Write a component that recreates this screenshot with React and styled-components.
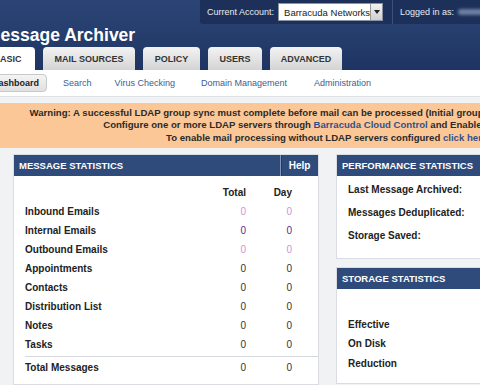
import React from 'react';
import styled, { createGlobalStyle } from 'styled-components';

const GlobalStyle = createGlobalStyle`
  html, body {
    margin: 0;
    padding: 0;
    overflow: hidden;
    background: #f1f2f4;
    font-family: "Liberation Sans", Arial, sans-serif;
  }
`;

const Page = styled.div`
  width: 720px;
  margin-left: -20px;
`;

const Header = styled.div`
  height: 70px;
  background: linear-gradient(to bottom, #2b4576 0%, #243c6a 60%, #1e3462 100%);
  display: flex;
  flex-direction: column;
  position: relative;
`;

const AccountBar = styled.div`
  position: absolute;
  top: 0;
  left: 220px;
  width: 320px;
  height: 24px;
  background: #1d3059;
  border-bottom-left-radius: 3px;
  display: flex;
  align-items: center;
  padding-left: 7px;
  box-sizing: border-box;
  color: #e8ecf3;
  font-size: 9px;
  white-space: nowrap;
`;

const Select = styled.div`
  margin-left: 4px;
  width: 105px;
  height: 18px;
  background: #fff;
  border: 1px solid #8a93a3;
  display: flex;
  align-items: center;
  justify-content: space-between;
  color: #222;
  font-size: 9.5px;
  padding-left: 5px;
  box-sizing: border-box;
`;

const SelectArrow = styled.div`
  width: 11px;
  height: 16px;
  background: linear-gradient(#f2f2f2, #cfcfcf);
  border-left: 1px solid #9a9a9a;
  display: flex;
  align-items: center;
  justify-content: center;
  &::after {
    content: '';
    border-left: 3px solid transparent;
    border-right: 3px solid transparent;
    border-top: 4px solid #222;
  }
`;

const Divider = styled.div`
  width: 1px;
  height: 24px;
  background: #3b5180;
  margin: 0 7px 0 9px;
`;

const Blur = styled.span`
  display: inline-block;
  width: 30px;
  height: 6px;
  margin-left: 4px;
  background: #6d7fa3;
  border-radius: 3px;
  filter: blur(1.5px);
`;

const Title = styled.div`
  color: #fff;
  font-weight: bold;
  font-size: 17.5px;
  padding: 27px 0 0 6px;
  height: 47px;
  box-sizing: border-box;
  line-height: 17px;
`;

const Tabs = styled.div`
  display: flex;
  gap: 8px;
  height: 23px;
`;

const Tab = styled.div`
  height: 23px;
  width: ${p => p.$w}px;
  display: flex;
  align-items: center;
  justify-content: center;
  border-radius: 4px 4px 0 0;
  font-size: 9px;
  font-weight: bold;
  color: #333;
  background: ${p => p.$active ? '#fff' : 'linear-gradient(#f3f3f3, #d4d4d4)'};
`;

const SubNav = styled.div`
  height: 27px;
  background: #fff;
  border-bottom: 1px solid #dde0e4;
  display: flex;
  align-items: center;
  font-size: 9px;
  box-sizing: border-box;
`;

const NavLink = styled.div`
  color: ${p => p.$active ? '#222' : '#3d5d93'};
  font-weight: ${p => p.$active ? 'bold' : 'normal'};
  margin-left: ${p => p.$ml}px;
  ${p => p.$active && `
    background: linear-gradient(#f4f4f4, #e0e0e0);
    border: 1px solid #c9c9c9;
    border-radius: 4px;
    padding: 3px 7px 3px 6px;
  `}
`;

const Warning = styled.div`
  margin-top: 6px;
  background: #fbc796;
  padding: 4px 0;
  text-align: center;
  font-size: 9.6px;
  font-weight: bold;
  color: #2b2b2b;
  line-height: 12.3px;
  width: 696px;
  white-space: nowrap;
`;

const WarnLink = styled.span`
  color: #34508a;
`;

const Content = styled.div`
  display: flex;
  align-items: flex-start;
  gap: 17px;
  padding: 6px 0 0 33px;
`;

const Panel = styled.div`
  background: #fff;
  border: 1px solid #d9dce1;
  width: ${p => p.$w}px;
  margin-bottom: ${p => p.$mb || 0}px;
`;

const PanelHead = styled.div`
  height: 21px;
  background: #2f4b7c;
  color: #fff;
  font-size: 9.5px;
  font-weight: bold;
  display: flex;
  align-items: center;
`;

const HeadTitle = styled.div`
  flex: 1;
  padding-left: 5px;
`;

const HelpBox = styled.div`
  width: 37px;
  height: 21px;
  border-left: 1px solid #8295b8;
  box-shadow: inset 1px 0 0 #23395f;
  display: flex;
  align-items: center;
  justify-content: center;
  font-size: 10px;
`;

const StatGrid = styled.div`
  display: grid;
  grid-template-columns: 1fr 40px 46px;
  padding: 7px 26px 5px 11px;
  font-size: 10px;
`;

const Cell = styled.div`
  height: ${p => p.$h || 19}px;
  display: flex;
  align-items: center;
  justify-content: ${p => p.$label ? 'flex-start' : 'flex-end'};
  font-weight: ${p => p.$bold ? 'bold' : 'normal'};
  color: ${p => p.$c || '#222'};
  ${p => p.$top && 'border-top: 1px solid #d5d8dc; margin: 2px -26px 0 0; padding-right: 26px;'}
  ${p => p.$topLabel && 'border-top: 1px solid #d5d8dc; margin: 2px 0 0 0;'}
`;

const Side = styled.div`
  display: flex;
  flex-direction: column;
`;

const InfoList = styled.div`
  display: flex;
  flex-direction: column;
  padding: ${p => p.$pt}px 0 ${p => p.$pb}px 11px;
  gap: ${p => p.$gap}px;
  font-size: 10px;
  line-height: 12px;
  font-weight: bold;
  color: #222;
`;

const rows = [
  ['Inbound Emails', '#cf92d4'],
  ['Internal Emails', '#5e2a8c'],
  ['Outbound Emails', '#cf92d4'],
  ['Appointments'],
  ['Contacts'],
  ['Distribution List'],
  ['Notes'],
  ['Tasks'],
];

export default function App() {
  return (
    <Page>
      <GlobalStyle />
      <Header>
        <AccountBar>
          Current Account:
          <Select>
            Barracuda Networks
            <SelectArrow />
          </Select>
          <Divider />
          Logged in as:
          <Blur />
        </AccountBar>
        <Title>Message Archiver</Title>
        <Tabs>
          <Tab $active $w={55}>BASIC</Tab>
          <Tab $w={92}>MAIL SOURCES</Tab>
          <Tab $w={57}>POLICY</Tab>
          <Tab $w={54}>USERS</Tab>
          <Tab $w={72}>ADVANCED</Tab>
        </Tabs>
      </Header>
      <SubNav>
        <NavLink $active $ml={5}>Dashboard</NavLink>
        <NavLink $ml={16}>Search</NavLink>
        <NavLink $ml={23}>Virus Checking</NavLink>
        <NavLink $ml={26}>Domain Management</NavLink>
        <NavLink $ml={27}>Administration</NavLink>
      </SubNav>
      <Warning>
        <div>Warning: A successful LDAP group sync must complete before mail can be processed (Initial group sync may take up to 24 hours).</div>
        <div>Configure one or more LDAP servers through <WarnLink>Barracuda Cloud Control</WarnLink> and Enable LDAP Syncing.</div>
        <div>To enable mail processing without LDAP servers configured <WarnLink>click here</WarnLink>.</div>
      </Warning>
      <Content>
        <Panel $w={304}>
          <PanelHead>
            <HeadTitle>MESSAGE STATISTICS</HeadTitle>
            <HelpBox>Help</HelpBox>
          </PanelHead>
          <StatGrid>
            <Cell />
            <Cell $bold>Total</Cell>
            <Cell $bold>Day</Cell>
            {rows.map(([label, c]) => (
              <React.Fragment key={label}>
                <Cell $label $bold>{label}</Cell>
                <Cell $c={c || '#333'}>0</Cell>
                <Cell $c={c || '#333'}>0</Cell>
              </React.Fragment>
            ))}
            <Cell $label $bold $h={22} $topLabel>Total Messages</Cell>
            <Cell $c="#333" $h={22} $topLabel>0</Cell>
            <Cell $c="#333" $h={22} $top>0</Cell>
          </StatGrid>
        </Panel>
        <Side>
          <Panel $w={170} $mb={8}>
            <PanelHead><HeadTitle>PERFORMANCE STATISTICS</HeadTitle></PanelHead>
            <InfoList $pt={8} $pb={16} $gap={11}>
              <div>Last Message Archived:</div>
              <div>Messages Deduplicated:</div>
              <div>Storage Saved:</div>
            </InfoList>
          </Panel>
          <Panel $w={170}>
            <PanelHead><HeadTitle>STORAGE STATISTICS</HeadTitle></PanelHead>
            <InfoList $pt={30} $pb={13} $gap={7.5}>
              <div>Effective</div>
              <div>On Disk</div>
              <div>Reduction</div>
            </InfoList>
          </Panel>
        </Side>
      </Content>
    </Page>
  );
}
